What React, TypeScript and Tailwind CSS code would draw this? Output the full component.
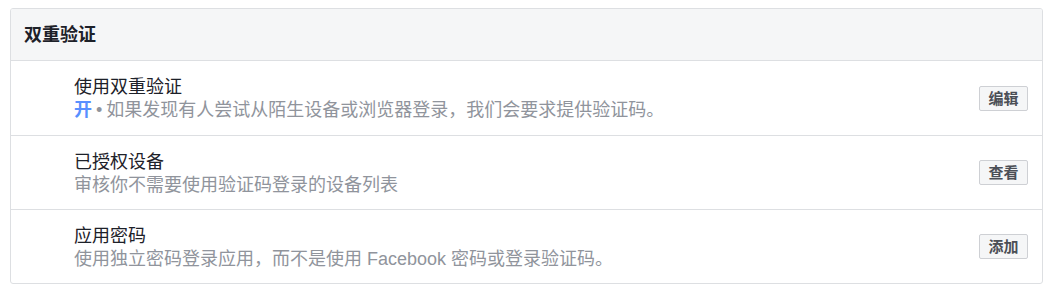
import React from 'react';

type Row = {
  title: string;
  desc: React.ReactNode;
  action: string;
};

const rows: Row[] = [
  {
    title: '使用双重验证',
    desc: (
      <>
        <span className="font-bold text-[#5890ff]">开</span>
        <span className="mx-[4px] font-['Liberation_Sans']">•</span>
        如果发现有人尝试从陌生设备或浏览器登录，我们会要求提供验证码。
      </>
    ),
    action: '编辑',
  },
  {
    title: '已授权设备',
    desc: '审核你不需要使用验证码登录的设备列表',
    action: '查看',
  },
  {
    title: '应用密码',
    desc: '使用独立密码登录应用，而不是使用 Facebook 密码或登录验证码。',
    action: '添加',
  },
];

export default function App() {
  return (
    <div className="w-[1061px] h-[295px] bg-white pt-[8px] px-[10px] font-['Liberation_Sans','Noto_Sans_CJK_SC',sans-serif]">
      <div className="w-[1033px] border border-[#dddfe2] rounded-[3px] overflow-hidden">
        {/* Header */}
        <div className="h-[52px] flex items-center px-[13px] bg-[#f5f6f7] border-b border-[#dddfe2]">
          <h2 className="text-[18px] font-bold text-[#1d2129] leading-none">双重验证</h2>
        </div>

        {rows.map((row, i) => (
          <div
            key={row.action}
            className={`h-[74px] flex items-center justify-between pl-[63px] pr-[14px] ${
              i > 0 ? 'border-t border-[#dddfe2]' : ''
            }`}
          >
            <div className="flex flex-col pt-[2px]">
              <div className="text-[18px] leading-[23px] text-[#1d2129]">{row.title}</div>
              <div className="text-[18px] leading-[23px] text-[#90949c]">{row.desc}</div>
            </div>
            <button className="w-[49px] h-[25px] flex items-center justify-center bg-[#f5f6f7] border border-[#ced0d4] rounded-[2px] text-[15px] font-bold text-[#4b4f56] leading-none">
              {row.action}
            </button>
          </div>
        ))}
      </div>
    </div>
  );
}
